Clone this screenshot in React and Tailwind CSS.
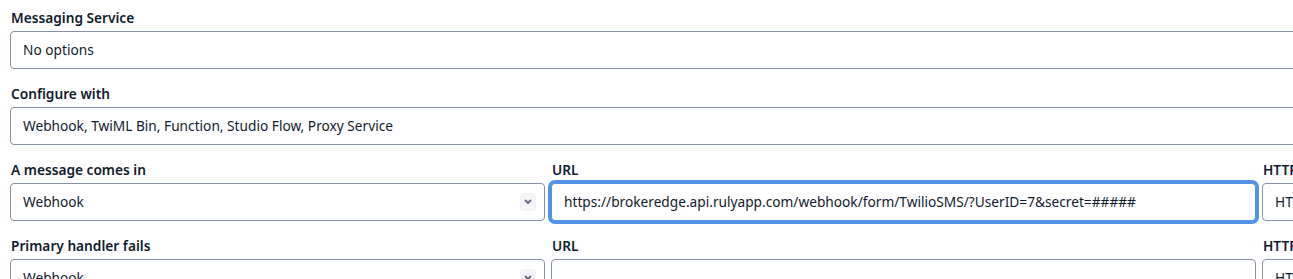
const font = { fontFamily: '"Segoe UI", "Noto Sans", "Open Sans", sans-serif' };

const Label = ({ children }) => (
  <div className="h-[22px] mb-[2px] pl-px text-[13.7px] leading-[22px] font-semibold text-[#121c2d] whitespace-nowrap overflow-hidden">
    {children}
  </div>
);

const Box = ({ children, className = "" }) => (
  <div
    className={
      "h-[38px] border border-[#8891aa] rounded-[4px] bg-white flex items-center px-3 text-[13.7px] text-[#121c2d] whitespace-nowrap overflow-hidden " +
      className
    }
  >
    {children}
  </div>
);

const Chevron = () => (
  <div className="ml-auto w-4 h-[18px] rounded-[4px] bg-[#f4f4f6] flex items-center justify-center shrink-0">
    <svg width="8" height="6" viewBox="0 0 8 6" fill="none">
      <path d="M1.5 1.5 L4 4 L6.5 1.5" stroke="#606b85" strokeWidth="1.8" strokeLinecap="round" strokeLinejoin="round" />
    </svg>
  </div>
);

const HandlerRow = ({ label, url, focused }) => (
  <div className="flex gap-[6px]">
    <div className="w-[535px] shrink-0">
      <Label>{label}</Label>
      <Box className="pr-2">
        <span>Webhook</span>
        <Chevron />
      </Box>
    </div>
    <div className="w-[705px] shrink-0">
      <Label>URL</Label>
      {focused ? (
        <div className="h-[38px] border border-[#5393e6] ring-[3px] ring-[#5393e6] rounded-[4px] bg-white flex items-center px-3 text-[13.7px] text-[#121c2d] whitespace-nowrap overflow-hidden">
          {url}
        </div>
      ) : (
        <Box>{url}</Box>
      )}
    </div>
    <div className="w-[200px] shrink-0">
      <Label>HTTP</Label>
      <Box>
        <span>HTTP POST</span>
      </Box>
    </div>
  </div>
);

export default function App() {
  return (
    <div className="w-[1293px] h-[279px] overflow-hidden bg-white" style={font}>
      <div className="pl-[10px] pt-[7px] w-[1400px] flex flex-col gap-[14px]">
        <div>
          <Label>Messaging Service</Label>
          <Box className="w-[1300px]">No options</Box>
        </div>
        <div>
          <Label>Configure with</Label>
          <Box className="w-[1300px]">Webhook, TwiML Bin, Function, Studio Flow, Proxy Service</Box>
        </div>
        <HandlerRow
          label="A message comes in"
          url="https://brokeredge.api.rulyapp.com/webhook/form/TwilioSMS/?UserID=7&secret=#####"
          focused
        />
        <HandlerRow label="Primary handler fails" url="" />
      </div>
    </div>
  );
}
